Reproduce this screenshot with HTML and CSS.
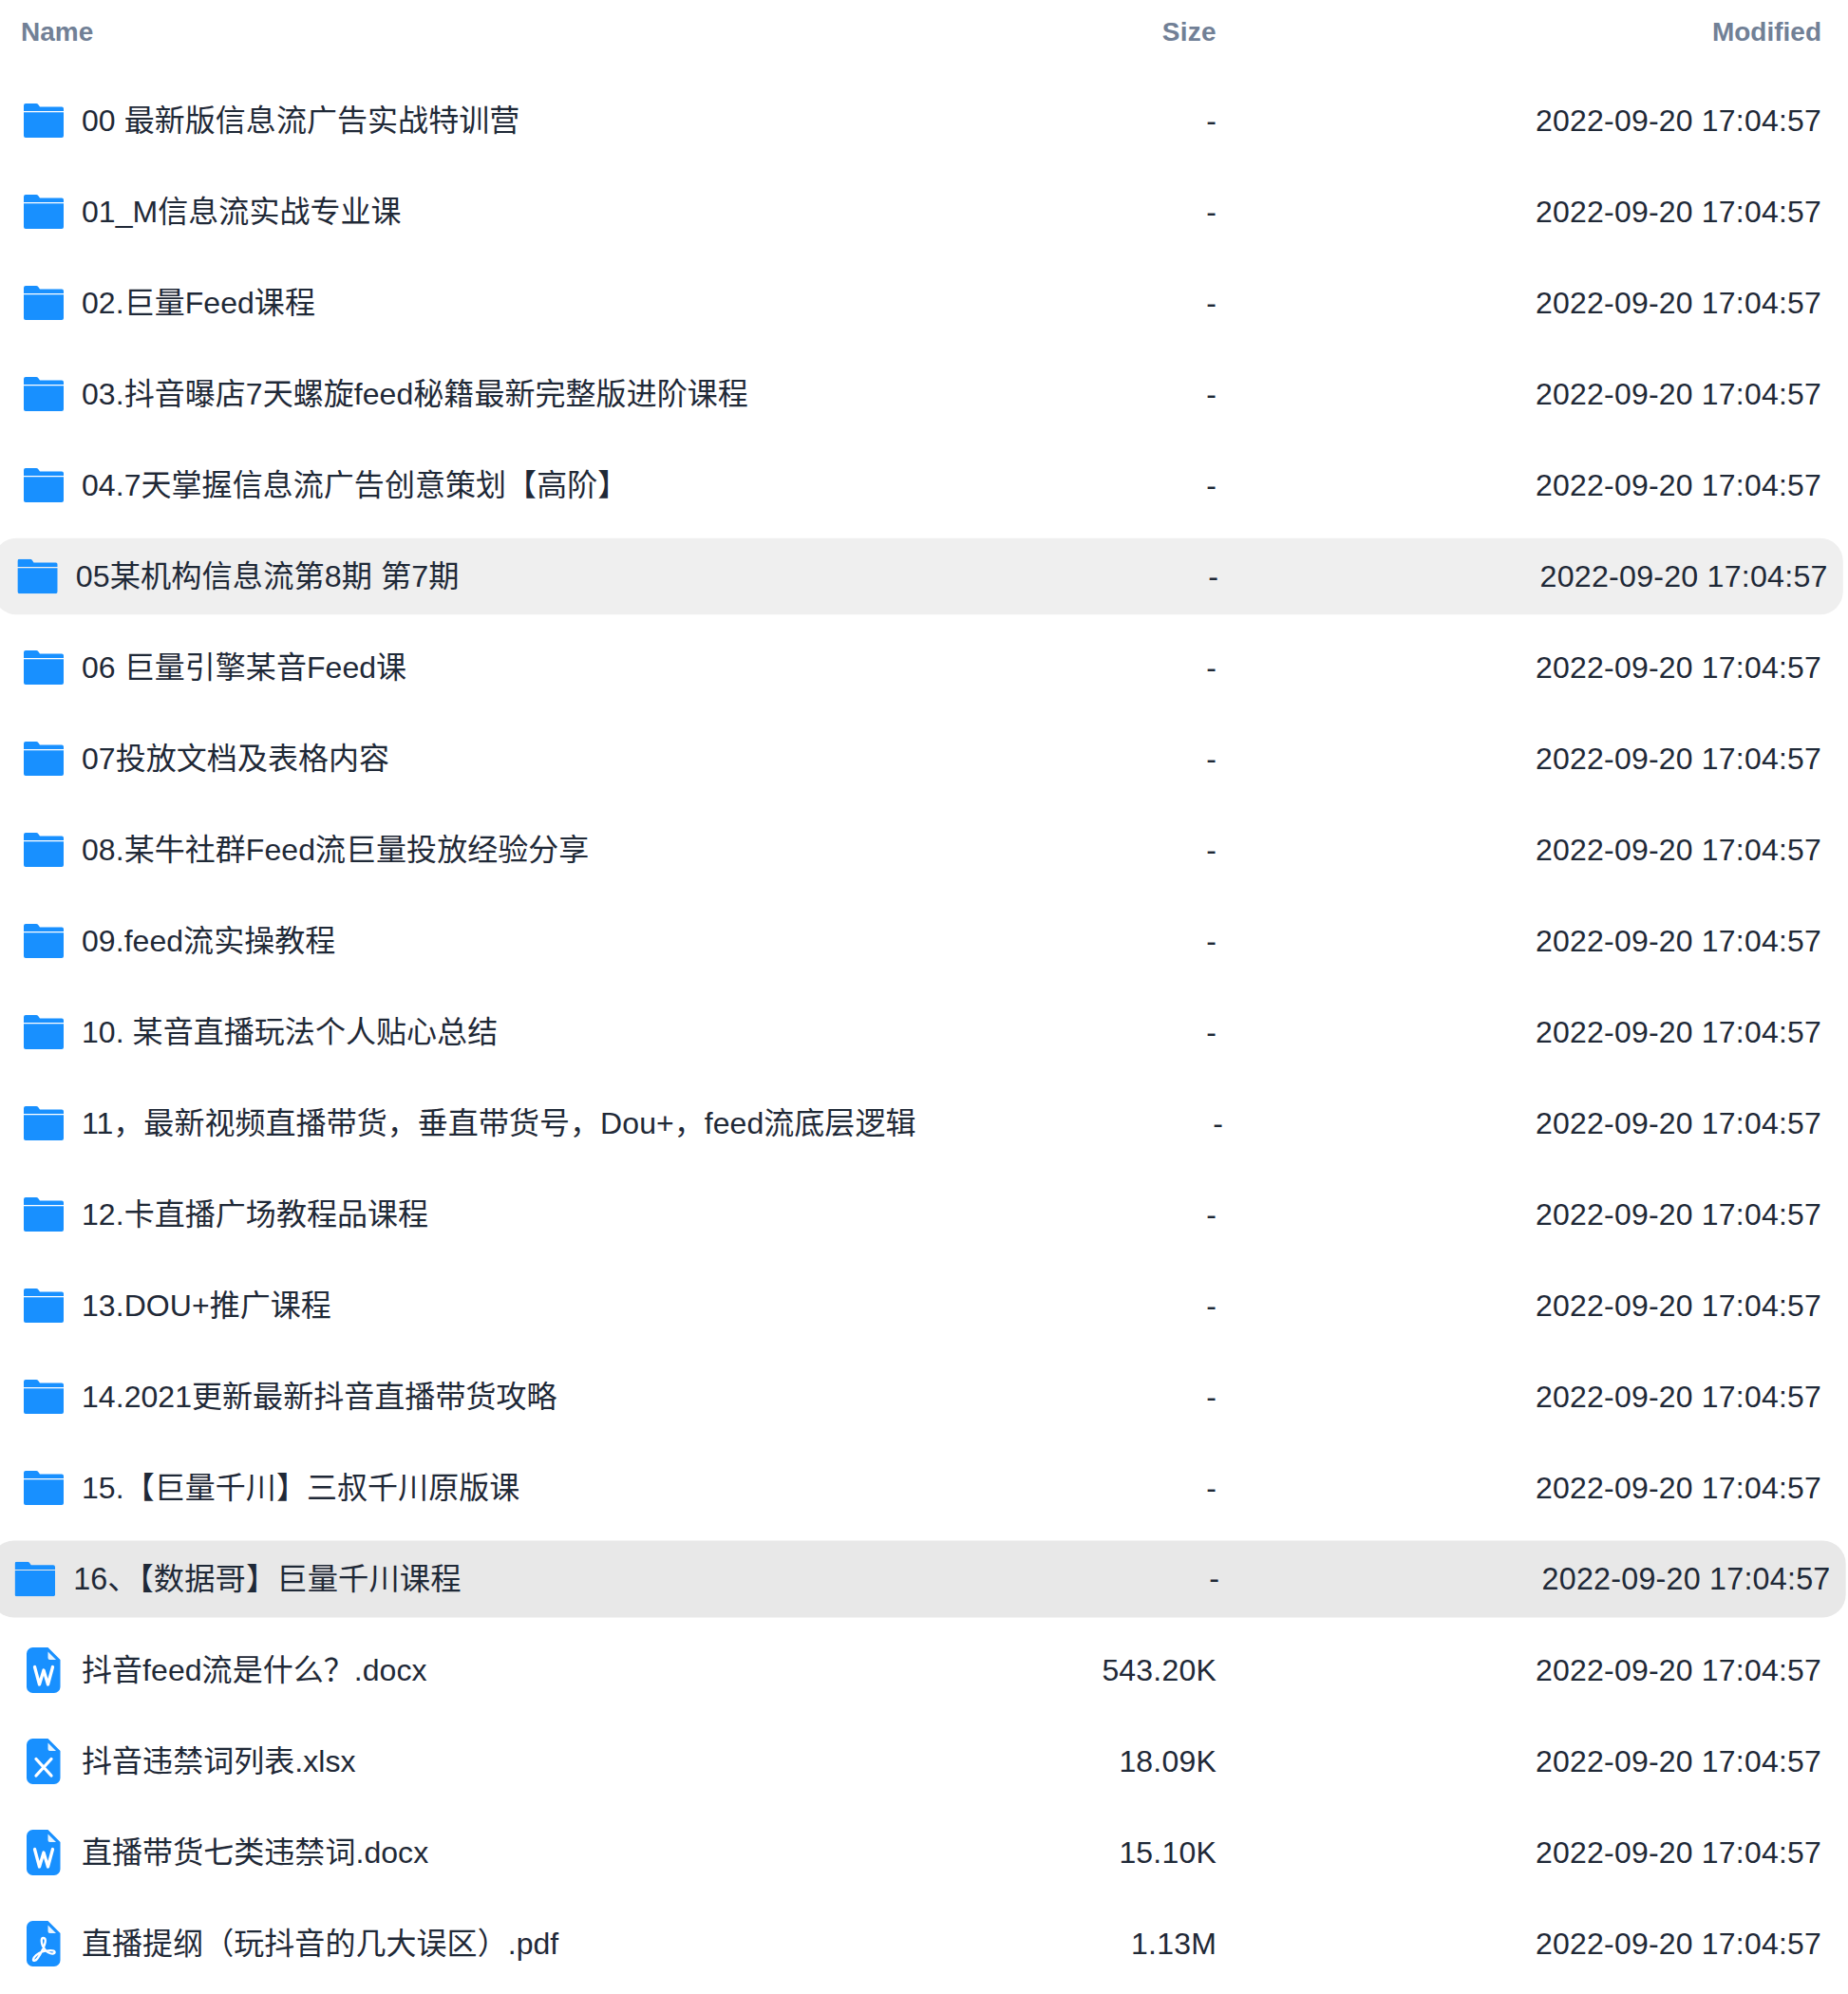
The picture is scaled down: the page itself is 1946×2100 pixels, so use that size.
FILE: index.html
```html
<!DOCTYPE html>
<html lang="zh-CN">
<head>
    <meta charset="UTF-8">
    <title>Files</title>
    <link rel="stylesheet" href="styles.css">
</head>
<body>
    <svg class="icon-defs" aria-hidden="true">
        <symbol id="folder" viewBox="0 0 42 36">
            <path d="M2 0H13c1 0 1.800.4 2.400 1.200L17 3.500H40a2 2 0 0 1 2 2V8H0V2a2 2 0 0 1 2-2z"/>
            <path d="M0 9.200H42V34a2 2 0 0 1-2 2H2a2 2 0 0 1-2-2z"/>
        </symbol>
        <symbol id="doc" viewBox="0 0 36 48">
            <path d="M6.500 0H22.500L35.500 13V41.500a6.500 6.500 0 0 1-6.500 6.500H6.500A6.500 6.500 0 0 1 0 41.500V6.500A6.500 6.500 0 0 1 6.500 0z"/>
            <path class="fold" d="M22.500 4.500L31 13H24.500a2 2 0 0 1-2-2z"/>
        </symbol>
    </svg>

    <div class="head">
        <div class="name-col">Name</div>
        <div class="size-col">Size</div>
        <div class="date-col">Modified</div>
    </div>

    <div class="list">
        <div class="row"><div class="name-col"><span class="icon"><svg class="folder"><use href="#folder"/></svg></span>00 最新版信息流广告实战特训营</div><div class="size-col">-</div><div class="date-col">2022-09-20 17:04:57</div></div>
        <div class="row"><div class="name-col"><span class="icon"><svg class="folder"><use href="#folder"/></svg></span>01_M信息流实战专业课</div><div class="size-col">-</div><div class="date-col">2022-09-20 17:04:57</div></div>
        <div class="row"><div class="name-col"><span class="icon"><svg class="folder"><use href="#folder"/></svg></span>02.巨量Feed课程</div><div class="size-col">-</div><div class="date-col">2022-09-20 17:04:57</div></div>
        <div class="row"><div class="name-col"><span class="icon"><svg class="folder"><use href="#folder"/></svg></span>03.抖音曝店7天螺旋feed秘籍最新完整版进阶课程</div><div class="size-col">-</div><div class="date-col">2022-09-20 17:04:57</div></div>
        <div class="row"><div class="name-col"><span class="icon"><svg class="folder"><use href="#folder"/></svg></span>04.7天掌握信息流广告创意策划【高阶】</div><div class="size-col">-</div><div class="date-col">2022-09-20 17:04:57</div></div>
        <div class="row row-fading"><div class="name-col"><span class="icon"><svg class="folder"><use href="#folder"/></svg></span>05某机构信息流第8期 第7期</div><div class="size-col">-</div><div class="date-col">2022-09-20 17:04:57</div></div>
        <div class="row"><div class="name-col"><span class="icon"><svg class="folder"><use href="#folder"/></svg></span>06 巨量引擎某音Feed课</div><div class="size-col">-</div><div class="date-col">2022-09-20 17:04:57</div></div>
        <div class="row"><div class="name-col"><span class="icon"><svg class="folder"><use href="#folder"/></svg></span>07投放文档及表格内容</div><div class="size-col">-</div><div class="date-col">2022-09-20 17:04:57</div></div>
        <div class="row"><div class="name-col"><span class="icon"><svg class="folder"><use href="#folder"/></svg></span>08.某牛社群Feed流巨量投放经验分享</div><div class="size-col">-</div><div class="date-col">2022-09-20 17:04:57</div></div>
        <div class="row"><div class="name-col"><span class="icon"><svg class="folder"><use href="#folder"/></svg></span>09.feed流实操教程</div><div class="size-col">-</div><div class="date-col">2022-09-20 17:04:57</div></div>
        <div class="row"><div class="name-col"><span class="icon"><svg class="folder"><use href="#folder"/></svg></span>10. 某音直播玩法个人贴心总结</div><div class="size-col">-</div><div class="date-col">2022-09-20 17:04:57</div></div>
        <div class="row row-long"><div class="name-col"><span class="icon"><svg class="folder"><use href="#folder"/></svg></span>11，最新视频直播带货，垂直带货号，Dou+，feed流底层逻辑</div><div class="size-col">-</div><div class="date-col">2022-09-20 17:04:57</div></div>
        <div class="row"><div class="name-col"><span class="icon"><svg class="folder"><use href="#folder"/></svg></span>12.卡直播广场教程品课程</div><div class="size-col">-</div><div class="date-col">2022-09-20 17:04:57</div></div>
        <div class="row"><div class="name-col"><span class="icon"><svg class="folder"><use href="#folder"/></svg></span>13.DOU+推广课程</div><div class="size-col">-</div><div class="date-col">2022-09-20 17:04:57</div></div>
        <div class="row"><div class="name-col"><span class="icon"><svg class="folder"><use href="#folder"/></svg></span>14.2021更新最新抖音直播带货攻略</div><div class="size-col">-</div><div class="date-col">2022-09-20 17:04:57</div></div>
        <div class="row"><div class="name-col"><span class="icon"><svg class="folder"><use href="#folder"/></svg></span>15.【巨量千川】三叔千川原版课</div><div class="size-col">-</div><div class="date-col">2022-09-20 17:04:57</div></div>
        <div class="row row-hover"><div class="name-col"><span class="icon"><svg class="folder"><use href="#folder"/></svg></span>16、【数据哥】巨量千川课程</div><div class="size-col">-</div><div class="date-col">2022-09-20 17:04:57</div></div>
        <div class="row"><div class="name-col"><span class="icon"><svg class="doc" viewBox="0 0 36 48"><use href="#doc"/><path class="mark" d="M8.500 20.500L13.500 39L18 24L22.500 39L27.500 20.500"/></svg></span>抖音feed流是什么？.docx</div><div class="size-col">543.20K</div><div class="date-col">2022-09-20 17:04:57</div></div>
        <div class="row"><div class="name-col"><span class="icon"><svg class="doc" viewBox="0 0 36 48"><use href="#doc"/><path class="mark" d="M10 21.500L26 39M26 21.500L10 39"/></svg></span>抖音违禁词列表.xlsx</div><div class="size-col">18.09K</div><div class="date-col">2022-09-20 17:04:57</div></div>
        <div class="row"><div class="name-col"><span class="icon"><svg class="doc" viewBox="0 0 36 48"><use href="#doc"/><path class="mark" d="M8.500 20.500L13.500 39L18 24L22.500 39L27.500 20.500"/></svg></span>直播带货七类违禁词.docx</div><div class="size-col">15.10K</div><div class="date-col">2022-09-20 17:04:57</div></div>
        <div class="row"><div class="name-col"><span class="icon"><svg class="doc" viewBox="0 0 36 48"><use href="#doc"/><path class="mark mark-thin" d="M17.500 18C15 18 15.500 23 17 26.500C18.500 30 21 32.500 24.500 34C27.500 35.200 30 34.500 29.500 32.500C29 30.500 22 30.800 16.500 32.500C11.500 34 7.500 38 7 40.500C6.500 42.800 9.500 42.300 11.500 39.500C14.500 35.500 20 25 19.800 20.500C19.700 18.800 18.800 18 17.500 18Z"/></svg></span>直播提纲（玩抖音的几大误区）.pdf</div><div class="size-col">1.13M</div><div class="date-col">2022-09-20 17:04:57</div></div>
    </div>
</body>
</html>
```

FILE: styles.css
```css
body {
    margin: 0;
    font-family: "Liberation Sans", "Noto Sans CJK SC", sans-serif;
    font-size: 32px;
    line-height: 48px;
    color: #1f2937;
    background-color: #fff;
    overflow: hidden;
}
.icon-defs {
    display: none;
}
.head, .row {
    display: flex;
    align-items: center;
    width: 1934px;
    box-sizing: border-box;
    padding: 0 16px 0 22px;
}
.head {
    height: 68px;
    margin-bottom: 19px;
    font-size: 28px;
    font-weight: 700;
    color: #718096;
}
.list {
    display: flex;
    flex-direction: column;
    gap: 16px;
}
.row {
    height: 80px;
    border-radius: 24px;
}
.row-fading {
    background-color: #efefef;
    transform: scale(1.007);
}
.row-hover {
    background-color: #e8e8e8;
    transform: scale(1.01);
}
.row-long .size-col {
    margin-right: -7px;
}
.name-col {
    flex: 1;
    display: flex;
    align-items: center;
    min-width: 0;
    white-space: nowrap;
    letter-spacing: .05px;
}
.head .name-col {
    letter-spacing: 0;
}
.size-col {
    width: 320px;
    text-align: right;
    letter-spacing: .2px;
}
.head .size-col {
    letter-spacing: .3px;
}
.date-col {
    width: 637px;
    text-align: right;
}
.row .date-col {
    letter-spacing: .2px;
}
.icon {
    display: flex;
    justify-content: center;
    align-items: center;
    width: 48px;
    height: 48px;
    margin-right: 16px;
    flex-shrink: 0;
}
.folder {
    width: 42px;
    height: 36px;
    fill: #1890ff;
}
.doc {
    width: 36px;
    height: 48px;
    fill: #1890ff;
}
.fold {
    fill: #e6f4ff;
}
.mark {
    fill: none;
    stroke: #fff;
    stroke-width: 3.300;
    stroke-linecap: round;
    stroke-linejoin: round;
}
.mark-thin {
    stroke-width: 2.300;
}
```
